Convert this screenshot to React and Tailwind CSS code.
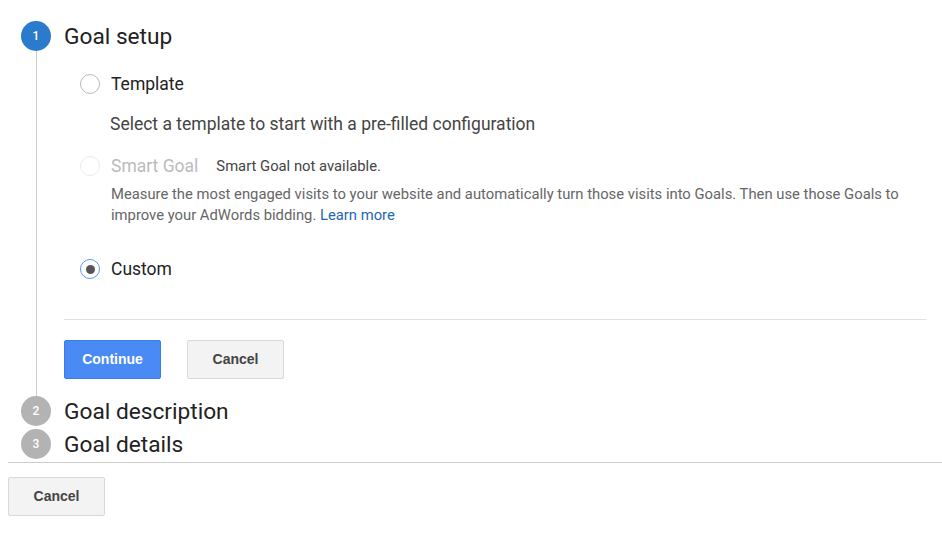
import React from 'react';

function StepBadge({ n, active }) {
  return (
    <div
      className={`w-[30px] h-[30px] rounded-full flex items-center justify-center text-white text-[12px] font-medium shrink-0 ${
        active ? 'bg-[#2a7bcb]' : 'bg-[#b3b3b3]'
      }`}
    >
      {n}
    </div>
  );
}

function Radio({ checked, disabled }) {
  if (disabled) {
    return <span className="w-[20px] h-[20px] rounded-full border border-[#ececec] bg-white shrink-0" />;
  }
  return (
    <span
      className={`w-[20px] h-[20px] rounded-full border bg-white shrink-0 flex items-center justify-center ${
        checked ? 'border-[#5b9af5]' : 'border-[#b9b9b9]'
      }`}
    >
      {checked && <span className="w-[9px] h-[9px] rounded-full bg-[#555]" />}
    </span>
  );
}

function Button({ primary, children }) {
  return (
    <button
      className={`w-[97px] h-[39px] rounded-[2px] border text-[14px] font-bold ${
        primary
          ? 'bg-[#4a8af4] border-[#3b7de6] text-white'
          : 'bg-[#f3f3f3] border-[#d9d9d9] text-[#444]'
      }`}
      style={{ fontFamily: '"Liberation Sans", Arial, sans-serif' }}
    >
      {children}
    </button>
  );
}

export default function App() {
  return (
    <div className="bg-white min-h-screen px-2 pt-[21px] text-[#222]" style={{ fontFamily: 'Roboto, "Noto Sans", sans-serif' }}>
      <div className="pl-[13px]">
        {/* Step 1 */}
        <div className="flex items-center h-[30px]">
          <StepBadge n={1} active />
          <h1 className="ml-[13px] text-[22.7px] leading-[30px] pt-px font-normal text-[#222]">Goal setup</h1>
        </div>
        <div className="ml-[15px] border-l border-[#cccccc] pl-[27px] pt-[23px] pb-[17px]">
          <div className="pl-[16px]">
            <label className="flex items-center h-[20px]">
              <Radio />
              <span className="ml-[11px] text-[17.5px] text-[#222]">Template</span>
            </label>
            <p className="mt-[18px] pl-[30px] h-[24px] leading-[24px] text-[17.5px] text-[#444]">
              Select a template to start with a pre-filled configuration
            </p>
            <label className="flex items-center h-[20px] mt-[20px]">
              <Radio disabled />
              <span className="ml-[11px] text-[17.5px] text-[#bbbbbb]">Smart Goal</span>
              <span className="ml-[18px] text-[14.8px] text-[#444]">Smart Goal not available.</span>
            </label>
            <p className="mt-[8px] pl-[31px] pr-[20px] text-[14.8px] leading-[21px] text-[#666]">
              Measure the most engaged visits to your website and automatically turn those visits into Goals. Then use those Goals to improve your AdWords bidding.{' '}
              <a className="text-[#2168b0]">Learn more</a>
            </p>
            <label className="flex items-center h-[20px] mt-[33px]">
              <Radio checked />
              <span className="ml-[11px] text-[17.5px] text-[#222]">Custom</span>
            </label>
          </div>
          <div className="mt-[40px] h-px bg-[#e0e0e0] mr-[8px]" />
          <div className="mt-[20px] flex gap-[26px]">
            <Button primary>Continue</Button>
            <Button>Cancel</Button>
          </div>
        </div>
        {/* Steps 2 and 3 */}
        <div className="flex items-center h-[30px]">
          <StepBadge n={2} />
          <h2 className="ml-[13px] text-[22.7px] leading-[30px] pt-px font-normal text-[#222]">Goal description</h2>
        </div>
        <div className="flex items-center h-[30px] mt-[3px]">
          <StepBadge n={3} />
          <h2 className="ml-[13px] text-[22.7px] leading-[30px] pt-px font-normal text-[#222]">Goal details</h2>
        </div>
      </div>
      <div className="mt-[3px] h-px bg-[#cccccc] -mr-2" />
      <div className="mt-[14px]">
        <Button>Cancel</Button>
      </div>
    </div>
  );
}
